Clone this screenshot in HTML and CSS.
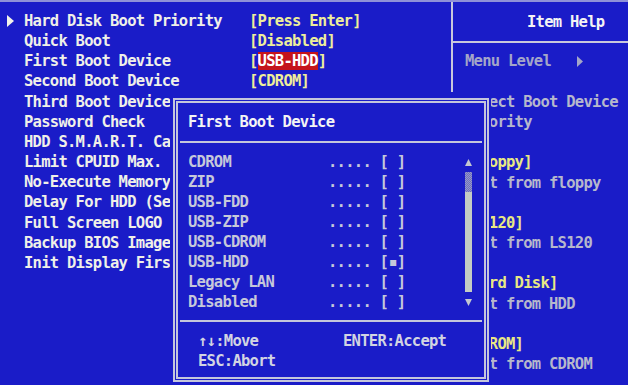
FILE: index.html
```html
<!DOCTYPE html>
<html lang="en">
<head>
  <meta charset="UTF-8" />
  <title>BIOS Setup - First Boot Device</title>
  <link rel="stylesheet" href="styles.css">
</head>
<body>
  <div class="screen">
    <!-- Left: setup items -->
    <div class="setup">
      <div class="row">
        <span class="mark"><svg width="7" height="12" viewBox="0 0 7 12"><polygon points="0,0 7,6 0,12" fill="#f2f2ea"/></svg></span>
        <span class="label">Hard Disk Boot Priority</span><span class="value">[Press Enter]</span>
      </div>
      <div class="row"><span class="mark"></span><span class="label">Quick Boot</span><span class="value">[Disabled]</span></div>
      <div class="row"><span class="mark"></span><span class="label">First Boot Device</span><span class="value">[<span class="pick">USB-HDD</span>]</span></div>
      <div class="row"><span class="mark"></span><span class="label">Second Boot Device</span><span class="value">[CDROM]</span></div>
      <div class="row"><span class="mark"></span><span class="label">Third Boot Device</span><span class="value">[LS120]</span></div>
      <div class="row"><span class="mark"></span><span class="label">Password Check</span><span class="value">[Setup]</span></div>
      <div class="row"><span class="mark"></span><span class="label">HDD S.M.A.R.T. Capability</span><span class="value">[Disabled]</span></div>
      <div class="row"><span class="mark"></span><span class="label">Limit CPUID Max. Val</span><span class="value">[Disabled]</span></div>
      <div class="row"><span class="mark"></span><span class="label">No-Execute Memory Protect</span><span class="value">[Enabled]</span></div>
      <div class="row"><span class="mark"></span><span class="label">Delay For HDD (Secs)</span><span class="value">[0]</span></div>
      <div class="row"><span class="mark"></span><span class="label">Full Screen LOGO Show</span><span class="value">[Enabled]</span></div>
      <div class="row"><span class="mark"></span><span class="label">Backup BIOS Image to HDD</span><span class="value">[Disabled]</span></div>
      <div class="row"><span class="mark"></span><span class="label">Init Display First</span><span class="value">[PCI Slot]</span></div>
    </div>

    <!-- Right: item help -->
    <div class="help">
      <div class="help-top">
        <div class="help-title">Item Help</div>
        <div class="help-level">Menu Level<span class="level-mark"><svg width="6" height="11" viewBox="0 0 6 11"><polygon points="0,0 6,5.5 0,11" fill="#a4a6c8"/></svg></span></div>
      </div>
      <div class="help-body">
        <div>Select Boot Device</div>
        <div>Priority</div>
        <div></div>
        <div class="hl">[Floppy]</div>
        <div>Boot from floppy</div>
        <div></div>
        <div class="hl">[LS120]</div>
        <div>Boot from LS120</div>
        <div></div>
        <div class="hl">[Hard Disk]</div>
        <div>Boot from HDD</div>
        <div></div>
        <div class="hl">[CDROM]</div>
        <div>Boot from CDROM</div>
      </div>
    </div>

    <!-- Popup dialog -->
    <div class="popup">
      <div class="popup-title">First Boot Device</div>
      <div class="popup-list">
        <div class="items">
          <div class="item"><span class="name">CDROM</span><span class="dots">.....</span> [ ]</div>
          <div class="item"><span class="name">ZIP</span><span class="dots">.....</span> [ ]</div>
          <div class="item"><span class="name">USB-FDD</span><span class="dots">.....</span> [ ]</div>
          <div class="item"><span class="name">USB-ZIP</span><span class="dots">.....</span> [ ]</div>
          <div class="item"><span class="name">USB-CDROM</span><span class="dots">.....</span> [ ]</div>
          <div class="item"><span class="name">USB-HDD</span><span class="dots">.....</span> [▪]</div>
          <div class="item"><span class="name">Legacy LAN</span><span class="dots">.....</span> [ ]</div>
          <div class="item"><span class="name">Disabled</span><span class="dots">.....</span> [ ]</div>
        </div>
        <div class="scroll">
          <div class="arrow"><svg width="7" height="7" viewBox="0 0 7 7"><polygon points="3.5,0 7,7 0,7" fill="#c4c8d0"/></svg></div>
          <div class="track"><div class="track-hatch"></div><div class="track-fill"></div></div>
          <div class="arrow"><svg width="7" height="7" viewBox="0 0 7 7"><polygon points="0,0 7,0 3.5,7" fill="#c4c8d0"/></svg></div>
        </div>
      </div>
      <div class="popup-foot">
        <span>↑↓:Move</span><span>ENTER:Accept</span>
        <span>ESC:Abort</span><span></span>
      </div>
    </div>
  </div>
</body>
</html>
```

FILE: styles.css
```css
html, body {
  margin: 0;
  padding: 0;
}
body {
  background-color: #1a1cc8;
  font-family: "DejaVu Sans Mono", "Liberation Mono", monospace;
  font-weight: bold;
  font-size: 15.5px;
  letter-spacing: -0.73px; /* tall BIOS glyphs on an 8.6px pitch */
}

.screen {
  position: relative;
  width: 628px;
  height: 385px;
  overflow: hidden;
  box-sizing: border-box;
  border-top: 2px solid #8f91d8;
  display: flex;
}

/* left column */
.setup {
  width: 451px;
  flex-shrink: 0;
  padding-top: 9px;
}
.row {
  display: flex;
  height: 20.17px;
  line-height: 20.17px;
  white-space: nowrap;
  color: #f0f0e8;
}
.mark {
  width: 24px;
  flex-shrink: 0;
  padding-left: 7px;
  box-sizing: border-box;
  display: flex;
  align-items: center;
}
.label {
  width: 225px;
  flex-shrink: 0;
  overflow: hidden;
}
.value {
  color: #eeee9a;
}
.pick {
  background-color: #c4141c;
  color: #ffffff;
}

/* help panel */
.help {
  flex: 1;
  white-space: nowrap;
}
.help-top {
  height: 90px;
  border-left: 2px solid #c8c8dc;
}
.help-title {
  height: 39px;
  line-height: 40px;
  padding-left: 74px;
  border-bottom: 2px solid #c8c8dc;
  color: #f4f4f4;
}
.help-level {
  margin-top: 8px;
  padding-left: 12px;
  line-height: 20px;
  color: #a4a6c8;
  display: flex;
  align-items: center;
}
.level-mark {
  margin-left: 26px;
  display: flex;
}
.help-body {
  padding-left: 12px;
  color: #b6b8cc;
}
.help-body div {
  height: 20.17px;
  line-height: 20.17px;
}
.help-body .hl {
  color: #e8e884;
}

/* popup: the shadows clear the whole character cells it sits on */
.popup {
  position: absolute;
  left: 173px;
  top: 96px;
  width: 316px;
  height: 284px;
  box-sizing: border-box;
  border: 5px double #c4c6dc;
  background-color: #1a1cc8;
  box-shadow: -3px 0 0 #1a1cc8, 2px 0 0 #1a1cc8, 0 -4px 0 #1a1cc8;
  display: flex;
  flex-direction: column;
  white-space: nowrap;
}
.popup-title {
  height: 38px;
  line-height: 38px;
  margin: 0 2px;
  padding-left: 8px;
  border-bottom: 2px solid #c4c6dc;
  color: #f4f4f4;
}
.popup-list {
  display: flex;
  padding: 9px 0 8px;
}
.items {
  width: 286px;
  padding-left: 10px;
  box-sizing: border-box;
  color: #c6c8da;
}
.item {
  height: 20px;
  line-height: 20px;
}
.name {
  display: inline-block;
  width: 140px;
}
.scroll {
  width: 9px;
  display: flex;
  flex-direction: column;
}
.arrow {
  height: 20px;
  display: flex;
  align-items: center;
  justify-content: center;
}
.track {
  flex: 1;
  margin: 0 1px;
  display: flex;
  flex-direction: column;
}
.track-hatch {
  height: 20px;
  background: repeating-conic-gradient(#9a9cc0 0 25%, #6a6cc4 0 50%) 0 0 / 2px 2px;
}
.track-fill {
  flex: 1;
  background-color: #c4ccc4;
}

.popup-foot {
  flex: 1;
  margin: 0 2px;
  border-top: 2px solid #c4c6dc;
  padding: 10px 0 0 18px;
  display: grid;
  grid-template-columns: 145px auto;
  grid-auto-rows: 19.5px;
  line-height: 19.5px;
  color: #d2d4e2;
}
```
